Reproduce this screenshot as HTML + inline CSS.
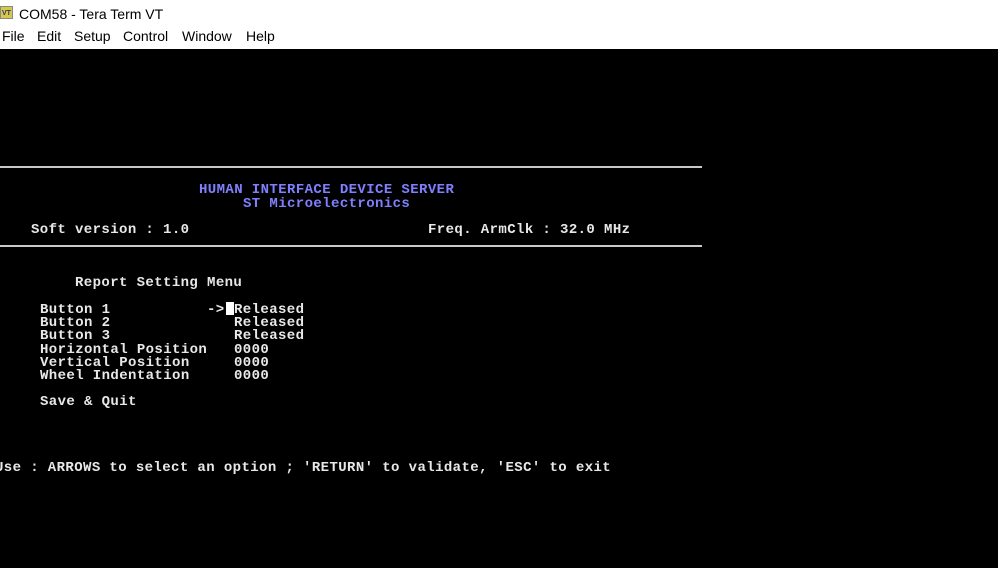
<!DOCTYPE html>
<html><head><meta charset="utf-8"><style>
html,body{margin:0;padding:0;width:998px;height:568px;overflow:hidden;background:#000}
#tb{position:absolute;left:0;top:0;width:998px;height:49px;background:#fff;font-family:"Liberation Sans",sans-serif;font-size:14px;color:#000}
#tb .t{position:absolute;left:19px;top:6px}
#tb .m{position:absolute;top:28px}
#ic{position:absolute;left:0;top:6px;width:13px;height:13px;background:#d8c84a;border:1px solid #888;font-size:7px;color:#336;font-weight:bold;line-height:13px;text-align:center;box-sizing:border-box}
.l{position:absolute;font-family:"Liberation Mono",monospace;font-weight:bold;font-size:14px;letter-spacing:0.4px;color:#e8e8e8;white-space:pre;line-height:14px}
.b{color:#8080ff}
.hr{position:absolute;left:0;width:702px;height:2px;background:#c8c8c8}
</style></head><body>
<div id="tb"><div id="ic">VT</div><div class="t">COM58 - Tera Term VT</div>
<span class="m" style="left:2px">File</span><span class="m" style="left:37px">Edit</span><span class="m" style="left:74px">Setup</span><span class="m" style="left:123px">Control</span><span class="m" style="left:182px">Window</span><span class="m" style="left:246px">Help</span></div>
<div class="hr" style="top:166px"></div>
<div class="hr" style="top:245px"></div>
<div class="l b" style="left:199px;top:183px">HUMAN INTERFACE DEVICE SERVER</div>
<div class="l b" style="left:243px;top:197px">ST Microelectronics</div>
<div class="l" style="left:31px;top:223px">Soft version : 1.0</div>
<div class="l" style="left:428px;top:223px">Freq. ArmClk : 32.0 MHz</div>
<div class="l" style="left:75px;top:276px">Report Setting Menu</div>
<div class="l" style="left:40px;top:303px">Button 1</div>
<div class="l" style="left:40px;top:316px">Button 2</div>
<div class="l" style="left:40px;top:329px">Button 3</div>
<div class="l" style="left:40px;top:343px">Horizontal Position</div>
<div class="l" style="left:40px;top:356px">Vertical Position</div>
<div class="l" style="left:40px;top:369px">Wheel Indentation</div>
<div class="l" style="left:207px;top:303px">-></div>
<div style="position:absolute;left:226px;top:302px;width:8px;height:13px;background:#fff"></div>
<div class="l" style="left:234px;top:303px">Released</div>
<div class="l" style="left:234px;top:316px">Released</div>
<div class="l" style="left:234px;top:329px">Released</div>
<div class="l" style="left:234px;top:343px">0000</div>
<div class="l" style="left:234px;top:356px">0000</div>
<div class="l" style="left:234px;top:369px">0000</div>
<div class="l" style="left:40px;top:395px">Save &amp; Quit</div>
<div class="l" style="left:-5px;top:461px">Use : ARROWS to select an option ; 'RETURN' to validate, 'ESC' to exit</div>
</body></html>
